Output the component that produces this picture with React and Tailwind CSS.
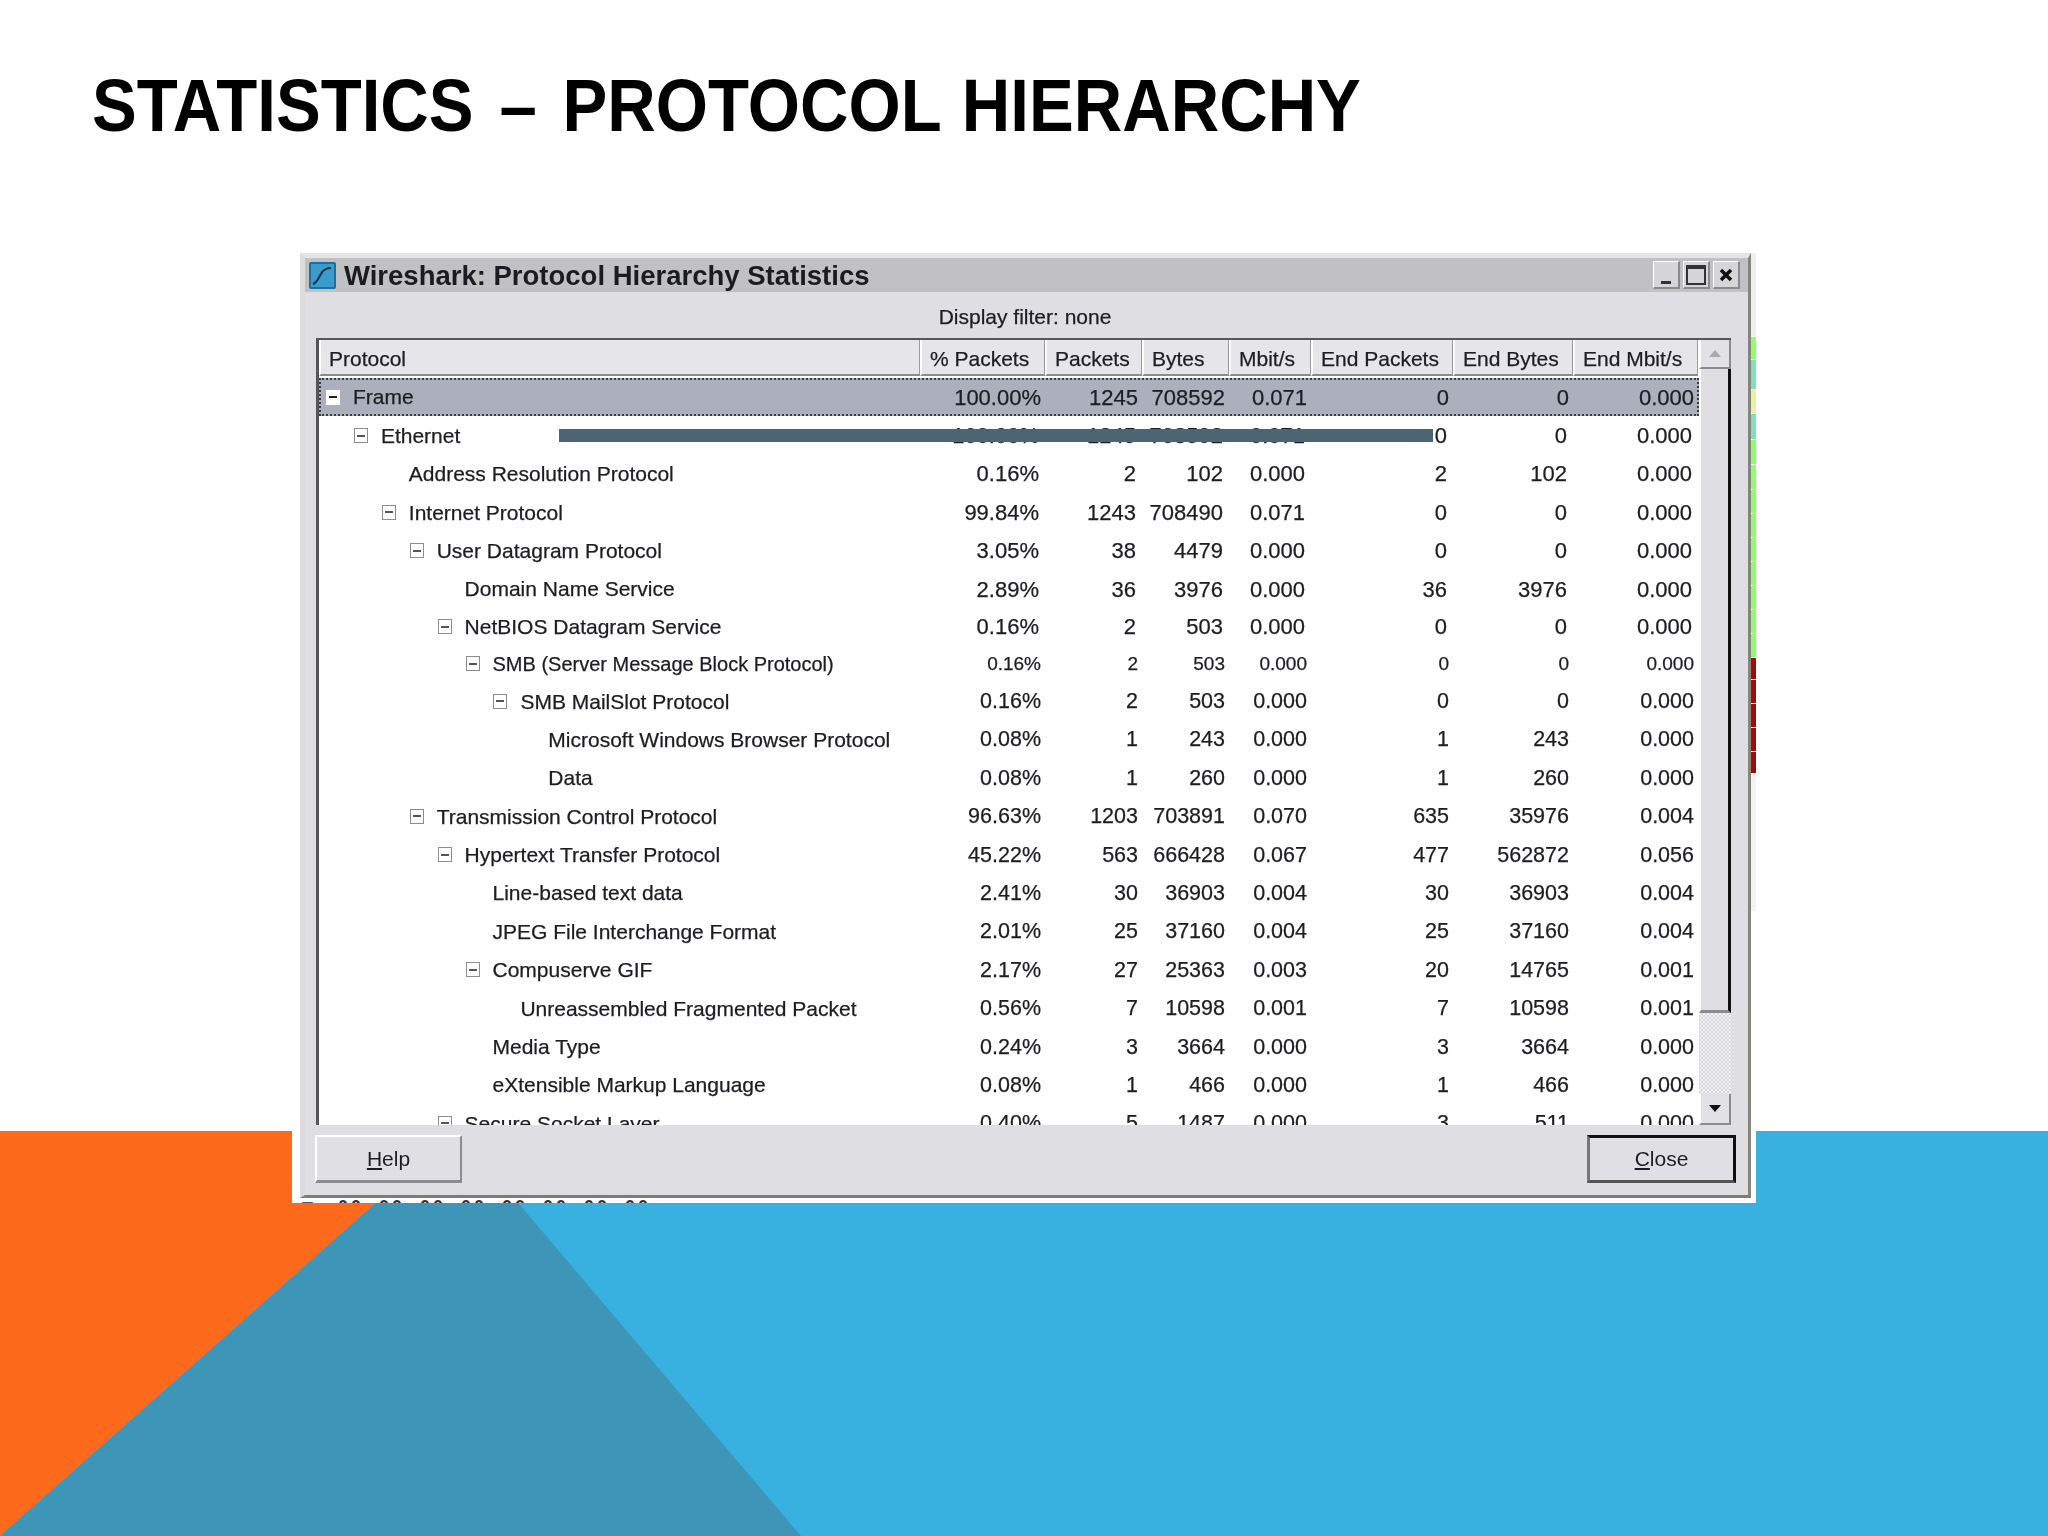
import React from "react";

const cols = [601, 125, 97, 87, 82, 142, 120, 125];
const headers = ["Protocol", "% Packets", "Packets", "Bytes", "Mbit/s", "End Packets", "End Bytes", "End Mbit/s"];
const rows = [
  [0, true, "Frame", "100.00%", "1245", "708592", "0.071", "0", "0", "0.000"],
  [1, true, "Ethernet", "100.00%", "1245", "708592", "0.071", "0", "0", "0.000"],
  [2, false, "Address Resolution Protocol", "0.16%", "2", "102", "0.000", "2", "102", "0.000"],
  [2, true, "Internet Protocol", "99.84%", "1243", "708490", "0.071", "0", "0", "0.000"],
  [3, true, "User Datagram Protocol", "3.05%", "38", "4479", "0.000", "0", "0", "0.000"],
  [4, false, "Domain Name Service", "2.89%", "36", "3976", "0.000", "36", "3976", "0.000"],
  [4, true, "NetBIOS Datagram Service", "0.16%", "2", "503", "0.000", "0", "0", "0.000"],
  [5, true, "SMB (Server Message Block Protocol)", "0.16%", "2", "503", "0.000", "0", "0", "0.000"],
  [6, true, "SMB MailSlot Protocol", "0.16%", "2", "503", "0.000", "0", "0", "0.000"],
  [7, false, "Microsoft Windows Browser Protocol", "0.08%", "1", "243", "0.000", "1", "243", "0.000"],
  [7, false, "Data", "0.08%", "1", "260", "0.000", "1", "260", "0.000"],
  [3, true, "Transmission Control Protocol", "96.63%", "1203", "703891", "0.070", "635", "35976", "0.004"],
  [4, true, "Hypertext Transfer Protocol", "45.22%", "563", "666428", "0.067", "477", "562872", "0.056"],
  [5, false, "Line-based text data", "2.41%", "30", "36903", "0.004", "30", "36903", "0.004"],
  [5, false, "JPEG File Interchange Format", "2.01%", "25", "37160", "0.004", "25", "37160", "0.004"],
  [5, true, "Compuserve GIF", "2.17%", "27", "25363", "0.003", "20", "14765", "0.001"],
  [6, false, "Unreassembled Fragmented Packet", "0.56%", "7", "10598", "0.001", "7", "10598", "0.001"],
  [5, false, "Media Type", "0.24%", "3", "3664", "0.000", "3", "3664", "0.000"],
  [5, false, "eXtensible Markup Language", "0.08%", "1", "466", "0.000", "1", "466", "0.000"],
  [4, true, "Secure Socket Layer", "0.40%", "5", "1487", "0.000", "3", "511", "0.000"],
];

const stripes = [
  ["h-[83px]", "bg-[#efeff0]"],
  ["h-[22px]", "bg-[#8dff6c]"],
  ["h-[29px]", "bg-[#7fe0c0]"],
  ["h-[23px]", "bg-[#e8f0a8]"],
  ["h-[25px]", "bg-[#7fe0c0]"],
  ["h-[24px]", "bg-[#8dff6c]"],
  ["h-[24px]", "bg-[#8dff6c]"],
  ["h-[23px]", "bg-[#8dff6c]"],
  ["h-[23px]", "bg-[#8dff6c]"],
  ["h-[23px]", "bg-[#8dff6c]"],
  ["h-[23px]", "bg-[#8dff6c]"],
  ["h-[23px]", "bg-[#8dff6c]"],
  ["h-[23px]", "bg-[#8dff6c]"],
  ["h-[23px]", "bg-[#8dff6c]"],
  ["h-[21px]", "bg-[#a00a0a]"],
  ["h-[23px]", "bg-[#a00a0a]"],
  ["h-[23px]", "bg-[#a00a0a]"],
  ["h-[23px]", "bg-[#a00a0a]"],
  ["h-[21px]", "bg-[#a00a0a]"],
  ["h-[137px]", "bg-[#f3f3f4]"],
];

function Box({ selected }) {
  return (
    <span className={`mr-[13px] flex h-[15px] w-[14px] shrink-0 items-center justify-center border ${selected ? "border-white bg-white" : "border-[#8d8d8d] bg-white"}`}>
      <span className={`h-[2px] w-[8px] ${selected ? "bg-[#222]" : "bg-[#555]"}`} />
    </span>
  );
}

function Row({ row, index }) {
  const [level, expand, name, ...vals] = row;
  const selected = index === 0;
  const height = index === 7 ? "h-[37px]" : index === 8 ? "h-[38px]" : index === 6 ? "h-[37px]" : "h-[38.4px]";
  const squat = index === 7 ? "text-[19px]" : index >= 8 ? "text-[21.5px]" : "text-[22px]";
  const shift = index >= 7 ? 2 : 0;
  return (
    <div className={`flex shrink-0 items-center ${height} ${selected ? "border-y-2 border-x-2 border-dotted border-[#3c3c44] bg-[#acafbc]" : ""} text-[#1d1d24] [-webkit-text-stroke:0.25px_#1d1d24]`}>
      {cols.map((w, c) => (
        c === 0 ? (
          <div key={c} style={{ width: w + shift, paddingLeft: 7 + level * 27.9 - (selected ? 2 : 0) }} className="flex shrink-0 items-center">
            {expand ? <Box selected={selected} /> : <span className="mr-[13px] h-[15px] w-[14px] shrink-0" />}
            <span className={`whitespace-nowrap ${index === 7 ? "text-[20px]" : "text-[21px]"}`}>{name}</span>
          </div>
        ) : (
          <div key={c} style={{ width: w }} className={`shrink-0 pr-[6px] text-right ${squat}`}>{vals[c - 1]}</div>
        )
      ))}
    </div>
  );
}

export default function App() {
  return (
    <div className="relative h-[1536px] w-[2048px] overflow-hidden bg-white font-['Liberation_Sans',Arial,sans-serif]">
      <svg className="absolute left-0 top-[1131px]" width="2048" height="405" viewBox="0 0 2048 405">
        <rect width="2048" height="405" fill="#39b1e0" />
        <polygon points="0,0 457,0 0,405" fill="#fd6a1c" />
        <polygon points="457,0 801,405 0,405" fill="#3d95b8" />
      </svg>

      <div className="relative">
        <h1 className="h-[253px] whitespace-nowrap pl-[92px] pt-[59px] text-[75px] font-bold leading-[92px] text-black">
          <span className="inline-block origin-left scale-x-[0.895] [word-spacing:3px]">STATISTICS <span className="mx-[5px]">–</span> PROTOCOL HIERARCHY</span>
        </h1>

        <div className="ml-[292px] flex w-[1464px] bg-white">
          <div className="ml-[8px] flex w-[1451px] flex-col">
            <div className="flex h-[945px] flex-col border-b-[3px] border-l-[5px] border-r-[3px] border-t-[5px] border-b-[#7c7c78] border-l-[#dcdcdc] border-r-[#85857c] border-t-[#e4e4e6] bg-[#dfdfe3] blur-[0.4px]">
              <div className="flex h-[34px] shrink-0 items-center bg-[#c1c1c3] pl-[4px] pr-[8px]">
                <svg width="27" height="27" viewBox="0 0 27 27" className="shrink-0">
                  <rect width="27" height="27" rx="2" fill="#17729f" />
                  <rect x="2" y="2" width="23" height="23" fill="#3a9ccd" />
                  <path d="M4 22 C8 21 10 15 12 12 C14 8 17 6 22 6" fill="none" stroke="#0b2f4a" strokeWidth="2" />
                </svg>
                <span className="ml-[8px] whitespace-nowrap pt-[2px] text-[27.5px] font-bold text-[#1b1b22]">Wireshark: Protocol Hierarchy Statistics</span>
                <div className="ml-auto flex gap-[3px]">
                  <span className="flex h-[28px] w-[27px] items-end justify-center border-b-2 border-l border-r-2 border-t border-b-[#8a8a8a] border-l-white border-r-[#8a8a8a] border-t-white bg-[#d6d6da] pb-[3px]">
                    <span className="h-[3px] w-[10px] bg-[#333]" />
                  </span>
                  <span className="flex h-[28px] w-[27px] items-center justify-center border-b-2 border-l border-r-2 border-t border-b-[#8a8a8a] border-l-white border-r-[#8a8a8a] border-t-white bg-[#d6d6da]">
                    <span className="h-[20px] w-[20px] border-2 border-t-4 border-[#333]" />
                  </span>
                  <span className="flex h-[28px] w-[27px] items-center justify-center border-b-2 border-l border-r-2 border-t border-b-[#8a8a8a] border-l-white border-r-[#8a8a8a] border-t-white bg-[#d6d6da]">
                    <svg width="14" height="14" viewBox="0 0 14 14">
                      <path d="M2 2 L12 12 M12 2 L2 12" stroke="#111" strokeWidth="3.5" />
                    </svg>
                  </span>
                </div>
              </div>

              <div className="flex h-[46px] shrink-0 items-center justify-center pr-[3px] pt-[4px] text-[21px] text-[#1d1d24] [-webkit-text-stroke:0.25px_#1d1d24]">Display filter: none</div>

              <div className="relative ml-[11px] flex h-[787px] w-[1415px] shrink-0 border-l-[3px] border-t-[2px] border-[#55555a] bg-white">
                <div className="flex w-[1380px] shrink-0 flex-col overflow-hidden">
                  <div className="flex h-[36px] shrink-0 text-[21px] text-[#1d1d24] [-webkit-text-stroke:0.25px_#1d1d24]">
                    {headers.map((h, i) => (
                      <div key={h} style={{ width: cols[i] }} className="flex shrink-0 items-center whitespace-nowrap border-b-[2px] border-l-2 border-r border-b-[#8a8a90] border-l-white border-r-[#9a9aa0] bg-[#e6e6ea] pl-[8px] pt-[3px]">{h}</div>
                    ))}
                  </div>
                  <div className="flex flex-col pt-[2px]">
                    {rows.map((r, i) => <Row key={i} row={r} index={i} />)}
                  </div>
                </div>

                <div className="flex w-[32px] shrink-0 flex-col bg-[#dfdfe3]">
                  <div className="flex h-[29px] shrink-0 items-center justify-center border-b-2 border-l-2 border-r-2 border-b-[#8a8a90] border-l-white border-r-[#8a8a90] bg-[#e2e2e6]">
                    <span className="h-0 w-0 border-x-[6px] border-b-[7px] border-x-transparent border-b-[#a9a9b0]" />
                  </div>
                  <div className="h-[644px] shrink-0 border-b-[3px] border-l-2 border-r-[3px] border-b-[#8a8a90] border-l-white border-r-[#111] bg-[#dfdfe3]" />
                  <div className="h-[81px] shrink-0 bg-[repeating-conic-gradient(#d8d8dc_0_25%,#f1f1f3_0_50%)] bg-[length:4px_4px]" />
                  <div className="flex flex-1 items-center justify-center border-b-2 border-l-2 border-r-2 border-b-[#8a8a90] border-l-white border-r-[#8a8a90] bg-[#e2e2e6]">
                    <span className="h-0 w-0 border-x-[6px] border-t-[7px] border-x-transparent border-t-[#111]" />
                  </div>
                </div>

                <div className="absolute left-[240px] top-[89px] h-[13px] w-[874px] bg-[#4d6472]" />
              </div>

              <div className="flex h-[67px] shrink-0 items-start justify-between pl-[10px] pr-[12px] pt-[10px]">
                <button className="h-[48px] w-[147px] border-b-[3px] border-l-2 border-r-2 border-t-2 border-b-[#8a8a90] border-l-white border-r-[#8a8a90] border-t-white bg-[#e0e0e4] text-[21px] text-[#1d1d24]"><span className="underline">H</span>elp</button>
                <button className="h-[48px] w-[149px] border-[3px] border-b-[#555] border-l-[#777] border-r-[#111] border-t-[#111] bg-[#e0e0e4] text-[21px] text-[#1d1d24]"><span className="underline">C</span>lose</button>
              </div>
            </div>
            <div className="flex h-[5px] items-start gap-[22px] overflow-hidden pl-[2px] text-[18px] font-bold leading-[18px] tracking-[3px] text-[#333] [word-spacing:7px]">
              <span>□</span><span>00 00 00 00 00 00 00 00</span>
            </div>
          </div>
          <div className="flex w-[5px] flex-col gap-px">
            {stripes.map(([h, c], i) => <div key={i} className={`${h} ${c} shrink-0`} />)}
          </div>
        </div>
      </div>
    </div>
  );
}
